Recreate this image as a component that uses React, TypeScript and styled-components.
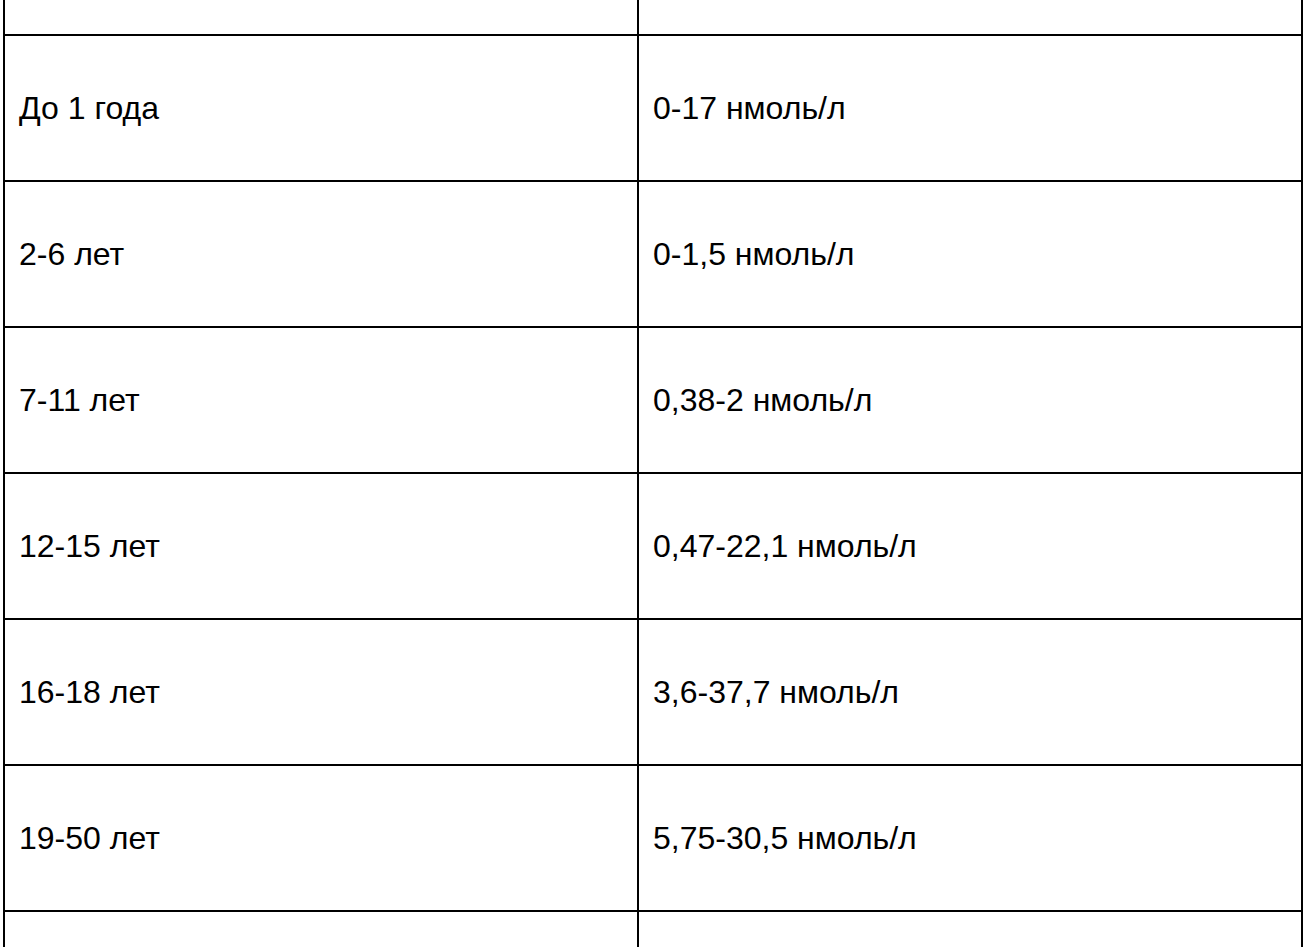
import React from "react";
import styled, { createGlobalStyle } from "styled-components";

const Global = createGlobalStyle`
  html, body { margin: 0; padding: 0; background: #ffffff; }
  body { font-family: "Liberation Sans", Arial, sans-serif; color: #000; }
`;

const Page = styled.div`
  padding-left: 3px;
  height: 947px;
  overflow: hidden;
`;

const Table = styled.div`
  width: 1300px;
  box-sizing: border-box;
  border-left: 2px solid #000;
  border-right: 2px solid #000;
`;

const Row = styled.div<{ $h: number }>`
  display: grid;
  grid-template-columns: 634px 1fr;
  height: ${(p) => p.$h}px;
  border-bottom: 2px solid #000;
`;

const Cell = styled.div<{ $divider?: boolean }>`
  display: flex;
  align-items: center;
  padding-left: 14px;
  font-size: 32px;
  line-height: 1;
  ${(p) => (p.$divider ? "border-right: 2px solid #000;" : "")}
`;

const rows: [string, string][] = [
  ["До 1 года", "0-17 нмоль/л"],
  ["2-6 лет", "0-1,5 нмоль/л"],
  ["7-11 лет", "0,38-2 нмоль/л"],
  ["12-15 лет", "0,47-22,1 нмоль/л"],
  ["16-18 лет", "3,6-37,7 нмоль/л"],
  ["19-50 лет", "5,75-30,5 нмоль/л"],
];

export default function App() {
  return (
    <Page>
      <Global />
      <Table>
        <Row $h={34}>
          <Cell $divider />
          <Cell />
        </Row>
        {rows.map(([a, b]) => (
          <Row $h={144} key={a}>
            <Cell $divider>{a}</Cell>
            <Cell>{b}</Cell>
          </Row>
        ))}
        <Row $h={144}>
          <Cell $divider />
          <Cell />
        </Row>
      </Table>
    </Page>
  );
}
